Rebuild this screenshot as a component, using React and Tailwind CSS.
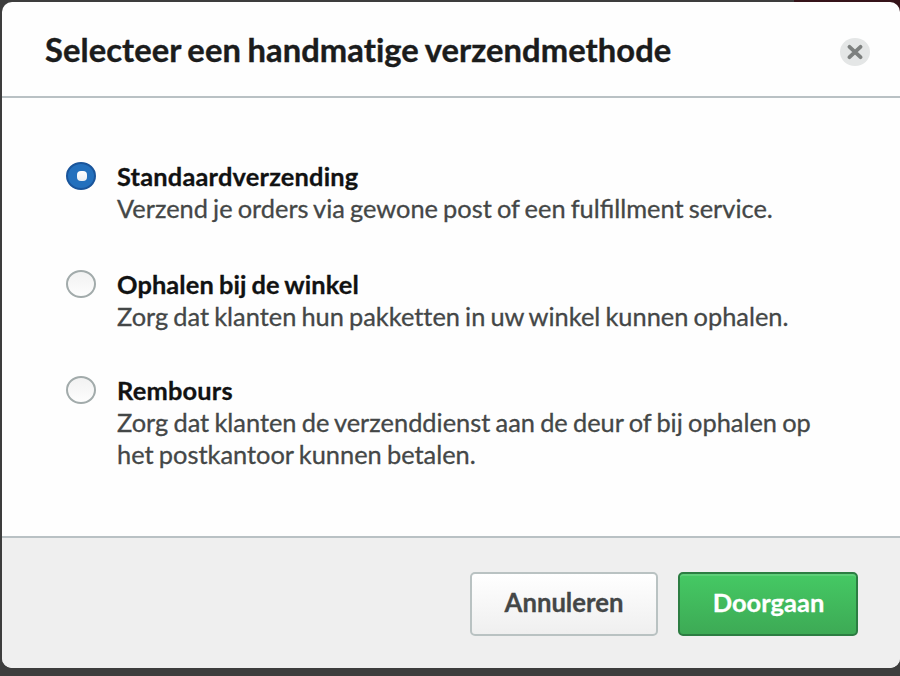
const options = [
  { title: "Standaardverzending", lines: ["Verzend je orders via gewone post of een fulfillment service."], checked: true, h: "h-[108px]", b: "tracking-[0.2px]", t: "[word-spacing:-1.4px]" },
  { title: "Ophalen bij de winkel", lines: ["Zorg dat klanten hun pakketten in uw winkel kunnen ophalen."], h: "h-[106px]", b: "tracking-[0.1px] [word-spacing:-1.2px]", t: "[font-variant-ligatures:none] [word-spacing:-1.4px]" },
  { title: "Rembours", lines: ["Zorg dat klanten de verzenddienst aan de deur of bij ophalen op", "het postkantoor kunnen betalen."], h: "h-[106px]", b: "tracking-[0.2px]", t: "[word-spacing:-1.3px]" },
];

function Radio({ checked }) {
  return checked ? (
    <span className="mt-0.5 flex h-7 w-[30px] shrink-0 items-center justify-center rounded-[50%] border-2 border-[#1a559b] bg-[#2370bd] pl-px">
      <span className="h-[10px] w-[10px] rounded-[4px] bg-linear-to-b from-white to-[#e9eef3]" />
    </span>
  ) : (
    <span className="mt-0.5 h-7 w-[30px] shrink-0 rounded-[50%] border-2 border-[#a2abab] bg-linear-to-b from-[#f2f2f2] to-[#fdfdfd]" />
  );
}

export default function App() {
  return (
    <div className="h-[676px] w-[900px] overflow-hidden bg-linear-to-r from-[#3d3d3d] from-[794px] to-[#351319] to-[794px] font-['Lato',sans-serif]">
      <div className="h-[676px] bg-linear-to-b from-transparent from-[20px] to-[#3d3d3d] to-[20px] pt-[2px] pl-[2px]">
        <div className="flex h-[666px] w-[898px] flex-col overflow-hidden rounded-[10px] bg-[#fefefe]">
          <header className="flex h-24 shrink-0 items-center justify-between border-b-2 border-[#b9c1c4] pr-[30px] pl-[43px]">
            <h1 className="mt-px text-[32.7px] leading-10 font-bold tracking-[0.08px] whitespace-nowrap text-[#1b1c1c] [-webkit-text-stroke:0.4px_#1b1c1c] [font-variant-ligatures:none] [word-spacing:-1.5px]">Selecteer een handmatige verzendmethode</h1>
            <button className="mt-[6px] flex h-7 w-[30px] items-center justify-center rounded-[50%] bg-[#e4e6e6]">
              <svg width="16" height="16" viewBox="0 0 16 16" stroke="#7d807f" strokeWidth="3.8" strokeLinecap="round"><path d="M2.5 2.8L13.5 13.2M13.5 2.8L2.5 13.2" /></svg>
            </button>
          </header>
          <main className="flex-1 pt-[62px] pl-16">
            {options.map((o) => (
              <label key={o.title} className={`flex gap-[21px] ${o.h}`}>
                <Radio checked={o.checked} />
                <span className="flex flex-col text-[25.4px] leading-8 whitespace-nowrap text-[#444747] [-webkit-text-stroke:0.3px_currentColor]">
                  <b className={`text-[#111212] ${o.b}`}>{o.title}</b>
                  {o.lines.map((l) => <span key={l} className={o.t}>{l}</span>)}
                </span>
              </label>
            ))}
          </main>
          <footer className="flex h-[132px] shrink-0 justify-end gap-5 border-t-2 border-[#b9c1c4] bg-[#efefef] pt-[34px] pr-[42px]">
            <button className="h-16 w-[188px] rounded-[5px] border-2 border-[#b9c2c2] bg-linear-to-b from-white to-[#efefef] pb-[3px] text-[25.7px] font-bold text-[#444747] [-webkit-text-stroke:0.3px_#444747]">Annuleren</button>
            <button className="h-16 w-[180px] rounded-[5px] border-2 border-[#2c7d42] bg-linear-to-b from-[#45c964] to-[#3daa55] pb-[3px] pl-px text-[25.5px] font-bold text-white shadow-[inset_0_2px_0_#5dcf78] [-webkit-text-stroke:0.3px_white]">Doorgaan</button>
          </footer>
        </div>
      </div>
    </div>
  );
}
